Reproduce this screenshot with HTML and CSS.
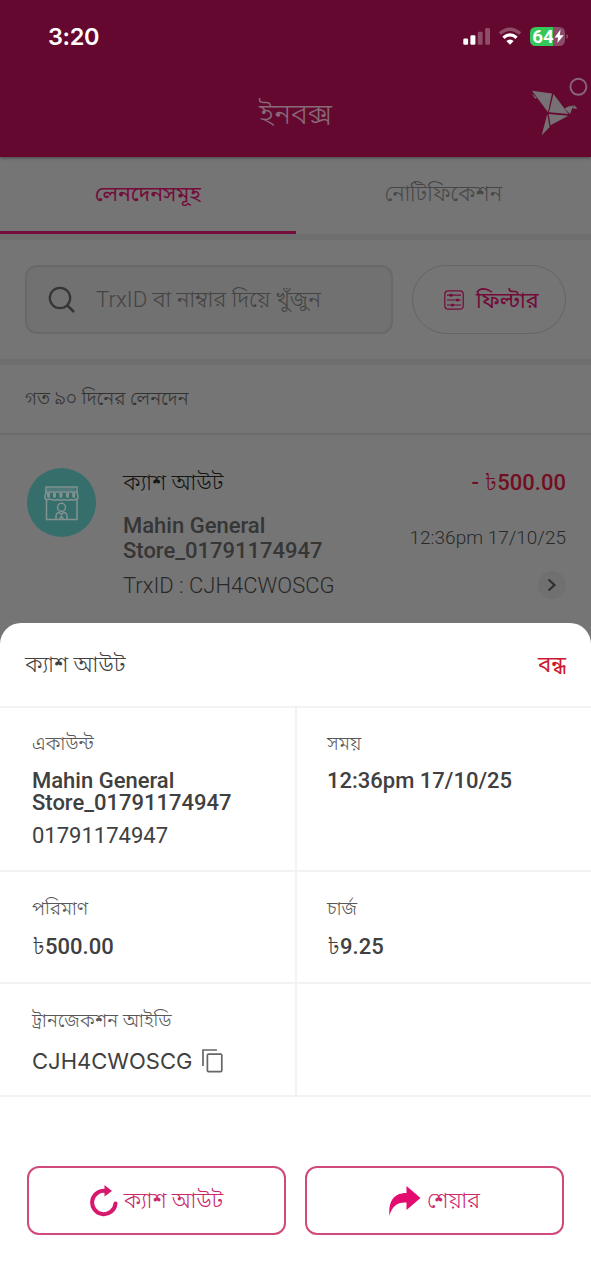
FILE: index.html
```html
<!DOCTYPE html>
<html lang="bn">
<head>
<meta charset="utf-8">
<title>ইনবক্স</title>
<link rel="stylesheet" href="styles.css">
</head>
<body>
<div class="phone">
  <header class="header">
    <div class="status">
      <span class="clock">3:20</span>
      <svg class="status-icons" width="106" height="24" viewBox="462 25 106 24">
        <g fill="#fff">
          <rect x="463.3" y="38.6" width="4.8" height="6.2" rx="1.3"/>
          <rect x="470.4" y="35.2" width="5" height="9.6" rx="1.3"/>
          <g opacity=".28"><rect x="477.8" y="31.8" width="4.8" height="13" rx="1.3"/><rect x="485.2" y="28" width="4.8" height="16.800" rx="1.300"/></g>
        </g>
        <g fill="none" stroke="#fff" stroke-width="3.300">
          <path d="M499.800 33.600Q510 25 520.200 33.600" opacity=".28"/>
          <path d="M503.400 37.800Q510 32 516.600 37.800"/>
        </g>
        <path d="M506.300 41Q510 37.900 513.700 41L510 44.800Z" fill="#fff"/>
        <path d="M535.500 27H553V46H535.500A5.500 5.500 0 0 1 530 40.500V32.500A5.500 5.500 0 0 1 535.500 27Z" fill="#35c759"/>
        <path d="M553 27H559.500A5.500 5.500 0 0 1 565 32.500V40.500A5.500 5.500 0 0 1 559.500 46H553Z" fill="#8a4b68"/>
        <path d="M566.300 34Q568 34.300 568 36.500T566.300 39Z" fill="#8a4b68"/>
        <text class="battery-text" x="532.200" y="42.700" textLength="21.500" lengthAdjust="spacingAndGlyphs">64</text>
        <path d="M560.500 29.600L554.600 37.400H558L557.400 43L563.700 35.200H559.800Z" fill="#fff"/>
      </svg>
    </div>
    <div class="title-bar">
      <h1 class="title">ইনবক্স</h1>
      <svg class="bird" width="62" height="62" viewBox="529 75 62 62">
        <circle cx="578.400" cy="86.800" r="8" fill="none" stroke="#88667a" stroke-width="1.900"/>
        <g fill="#777176">
          <path d="M532 90.800L552 93.500L548 112.300Z"/><path d="M531.800 93.200L537 98L535 98.500Z"/>
          <path d="M553.500 94L568.500 114L549 112.300Z"/>
          <path d="M548.700 114L568.300 115.800L550.500 125.300Z"/>
          <path d="M547.300 114L549.600 127L541.600 135.500Z"/>
          <path d="M564.500 108.500L568.200 106.600L573.500 105.500L570 114Z"/><path d="M574 105L577.500 108.800L573 108.500Z"/>
        </g>
      </svg>
    </div>
  </header>

  <nav class="tabs">
    <div class="tab tab-active"><span>লেনদেনসমূহ</span></div>
    <div class="tab"><span>নোটিফিকেশন</span></div>
  </nav>

  <section class="search-row">
    <div class="search">
      <svg width="28" height="28" viewBox="0 0 28 28" fill="none" stroke="#353535" stroke-width="2.200"><circle cx="12" cy="12" r="10.200"/><path d="M19.300 19.300L26 26" stroke-width="2.600"/></svg>
      <span class="search-text">TrxID বা নাম্বার দিয়ে খুঁজুন</span>
    </div>
    <div class="filter">
      <svg width="20" height="20" viewBox="0 0 20 20" fill="none" stroke="#730a38" stroke-width="1.200"><rect x=".8" y=".8" width="18.400" height="18.400" rx="3.500"/><path d="M3 5.200H17M3 10H17M3 15H17"/><g fill="#730a38" stroke="none"><circle cx="7" cy="5.200" r="1.600"/><circle cx="13.500" cy="10" r="1.600"/><circle cx="8.500" cy="15" r="1.600"/></g></svg>
      <span class="filter-text">ফিল্টার</span>
    </div>
  </section>

  <div class="period"><span>গত ৯০ দিনের লেনদেন</span></div>

  <section class="txn">
    <svg class="store" width="70" height="70" viewBox="0 0 70 70">
      <circle cx="35.500" cy="34.500" r="34.500" fill="#366e6c"/>
      <g fill="none" stroke="#819291" stroke-width="1.500">
        <path d="M20 19H51V24H20ZM20 24L19 28V30.500Q20 32 22 31.500T25.500 31.500Q28.500 33 31.800 31.500Q35 33 38.300 31.500Q41.500 33 44.700 31.500Q48 33 51.800 30.500V28L51 24"/>
        <path d="M20.500 32V51.500H51V32"/>
        <circle cx="35.500" cy="39.300" r="4"/><path d="M30 51V48.500Q30.300 44.500 33.500 44.500L35.500 46.500L37.500 44.500Q41 44.500 41 48.500V51M33.500 51L35.500 48.500L37.500 51"/>
      </g>
      <g fill="#819291"><rect x="21" y="20" width="28" height="3" opacity=".35"/><path d="M21 25H24V28A1.500 2 0 0 1 21 28ZM27 25H30V28A1.500 2 0 0 1 27 28ZM33.400 25H36.400V28A1.500 2 0 0 1 33.400 28ZM40 25H43V28A1.500 2 0 0 1 40 28ZM46.200 25H49.200V28A1.500 2 0 0 1 46.200 28Z"/></g>
    </svg>
    <div class="txn-main">
      <div class="txn-type"><span>ক্যাশ আউট</span></div>
      <div class="txn-name">Mahin General<br>Store_01791174947</div>
      <div class="txn-id">TrxID : CJH4CWOSCG</div>
    </div>
    <div class="txn-side">
      <div class="txn-amount">- <span class="taka">৳</span>500.00</div>
      <div class="txn-time">12:36pm 17/10/25</div>
      <div class="go"><svg width="10" height="14" viewBox="0 0 10 14" fill="none" stroke="#303030" stroke-width="2.200"><path d="M1.500 1.500L7.500 7L1.500 12.500"/></svg></div>
    </div>
  </section>

  <main class="sheet">
    <div class="sheet-head"><span>ক্যাশ আউট</span><span class="close">বন্ধ</span></div>
    <div class="grid">
      <div class="cell"><div class="label">একাউন্ট</div><div class="value name">Mahin General<br>Store_01791174947</div><div class="number">01791174947</div></div>
      <div class="cell"><div class="label">সময়</div><div class="value">12:36pm 17/10/25</div></div>
      <div class="cell lower"><div class="label">পরিমাণ</div><div class="value"><span class="taka">৳</span>500.00</div></div>
      <div class="cell lower"><div class="label">চার্জ</div><div class="value"><span class="taka">৳</span>9.25</div></div>
      <div class="cell lower"><div class="label">ট্রানজেকশন আইডি</div>
        <div class="code"><span>CJH4CWOSCG</span><svg width="21" height="24" viewBox="0 0 21 24" fill="none" stroke="#666" stroke-width="1.700"><path d="M1 17V1H15"/><rect x="5.400" y="5.200" width="14.400" height="17.400" rx="1"/></svg></div></div>
      <div class="cell"></div>
    </div>
    <div class="actions">
      <button class="btn"><svg width="28" height="32" viewBox="0 0 28 32"><path d="M17 6.200A11.700 11.700 0 1 0 25.500 18.500" fill="none" stroke="#d6196d" stroke-width="4" stroke-linecap="round"/><path d="M14.500 0L22 6L14.500 11.500Z" fill="#d6196d"/></svg><span>ক্যাশ আউট</span></button>
      <button class="btn"><svg width="32" height="30" viewBox="0 0 32 30"><path d="M.4 29.800C-.6 13 6 7.200 17.500 7V0L31.500 12L17.500 24V16.500C8 16 3.500 20 .4 29.800Z" fill="#e30b70"/></svg><span>শেয়ার</span></button>
    </div>
  </main>
</div>
</body>
</html>
```
FILE: styles.css
```css
* { box-sizing: border-box; }
body { margin: 0; background: #757575; font-family: Roboto, "Noto Sans Bengali", "Noto Sans", sans-serif; font-weight: 300; }
.phone { position: relative; width: 591px; height: 1280px; overflow: hidden; background: #757575; }
span { white-space: nowrap; }
svg { flex: none; display: block; }

.header { height: 157px; background: #65082f; box-shadow: 0 1px 3px rgba(0,0,0,.4); }
.status { height: 74px; display: flex; justify-content: space-between; padding: 25px 23px 0 48px; }
.clock { font: 600 23.500px/24px Inter, sans-serif; color: #fff; letter-spacing: -.4px; }
.battery-text { font: 700 17.500px Roboto, sans-serif; fill: #fff; }
.title-bar { height: 83px; display: grid; grid-template-columns: 62px 1fr 62px; }
.title { grid-column: 2; margin: 0; text-align: center; color: #886b7a; font-size: 29px; font-weight: 300; line-height: 80px; }
.bird { margin-top: 1px; }

.tabs { display: flex; height: 83px; border-bottom: 6px solid #6e6e6e; }
.tab { flex: 1; text-align: center; line-height: 74px; color: #474747; font-size: 21.800px; }
.tab-active { color: #740d3b; border-bottom: 3px solid #740d3b; font-size: 21.300px; line-height: 73px; font-weight: 400; }

.search-row { height: 125px; padding: 25px 25px 0; display: flex; gap: 19px; border-bottom: 6px solid #6e6e6e; }
.search { width: 368px; height: 69px; border: 2px solid #696969; border-radius: 12px; background: #717171; display: flex; align-items: center; gap: 20px; padding-left: 21px; color: #444; font-size: 22.200px; }
.search-text { padding-top: 2px; }
.filter { flex: 1; height: 69px; border: 1.5px solid #646464; border-radius: 35px; display: flex; align-items: center; gap: 12px; padding-left: 31px; color: #730a38; font-size: 21.500px; font-weight: 400; }
.filter-text { padding-top: 5px; }

.period { height: 70px; border-bottom: 2px solid #6b6b6b; padding-left: 25px; line-height: 68px; color: #333; font-size: 19px; }
.txn { height: 188px; display: flex; padding: 32px 25px 0 26px; }
.store { margin-top: 1px; }
.txn-main { flex: 1; padding-left: 27px; }
.txn-type { height: 46px; line-height: 30px; color: #151515; font-size: 22.200px; }
.txn-name { font-size: 22px; font-weight: 500; line-height: 25px; color: #363636; white-space: nowrap; }
.txn-id { margin-top: 10px; line-height: 26px; font-size: 22px; color: #292929; white-space: nowrap; }
.txn-side { width: 157px; display: flex; flex-direction: column; align-items: flex-end; white-space: nowrap; }
.txn-amount { height: 31px; font-size: 22px; font-weight: 500; line-height: 32px; color: #730d22; }
.taka { font-weight: 300; }
.txn-time { margin-top: 26px; font-size: 19px; line-height: 28px; color: #292929; }
.go { margin-top: 19px; width: 28px; height: 28px; border-radius: 50%; background: #707070; display: flex; align-items: center; justify-content: center; }

.sheet { position: absolute; left: 0; right: 0; top: 623px; bottom: 0; background: #fff; border-radius: 21px 21px 0 0; color: #404040; }
.sheet-head { height: 85px; padding: 0 25px; border-bottom: 2px solid #f2f2f2; display: flex; justify-content: space-between; line-height: 82px; font-size: 22.200px; }
.close { color: #cd1a32; font-weight: 400; }
.grid { display: grid; grid-template-columns: 297px 294px; grid-template-rows: 164px 112px 113px; }
.cell { padding: 22px 0 0 30px; border-bottom: 2px solid #f2f2f2; white-space: nowrap; }
.cell:nth-child(odd) { padding-left: 32px; border-right: 2px solid #f2f2f2; }
.lower { padding-top: 23px; }
.label { height: 28px; line-height: 27px; font-size: 18.900px; color: #585858; }
.value { margin-top: 10px; height: 26px; line-height: 26px; font-size: 22px; font-weight: 500; }
.name { margin-top: 12px; height: 44px; line-height: 22px; }
.number { margin-top: 9px; line-height: 26px; font-size: 22px; font-weight: 400; }
.lower .value { line-height: 28px; }
.code { margin-top: 12px; display: flex; align-items: center; gap: 10px; font: 400 22px/28px Inter, sans-serif; }
.actions { display: grid; grid-template-columns: 259px 259px; gap: 19px; padding: 69px 27px 0; }
.btn { height: 69px; padding: 0; border: 2px solid #d04a7e; border-radius: 12px; background: #fff; display: flex; align-items: center; justify-content: center; gap: 6px; color: #ca286a; font: 300 22px/30px Roboto, "Noto Sans Bengali", "Noto Sans", sans-serif; }
.btn span { padding-top: 1px; }
```
